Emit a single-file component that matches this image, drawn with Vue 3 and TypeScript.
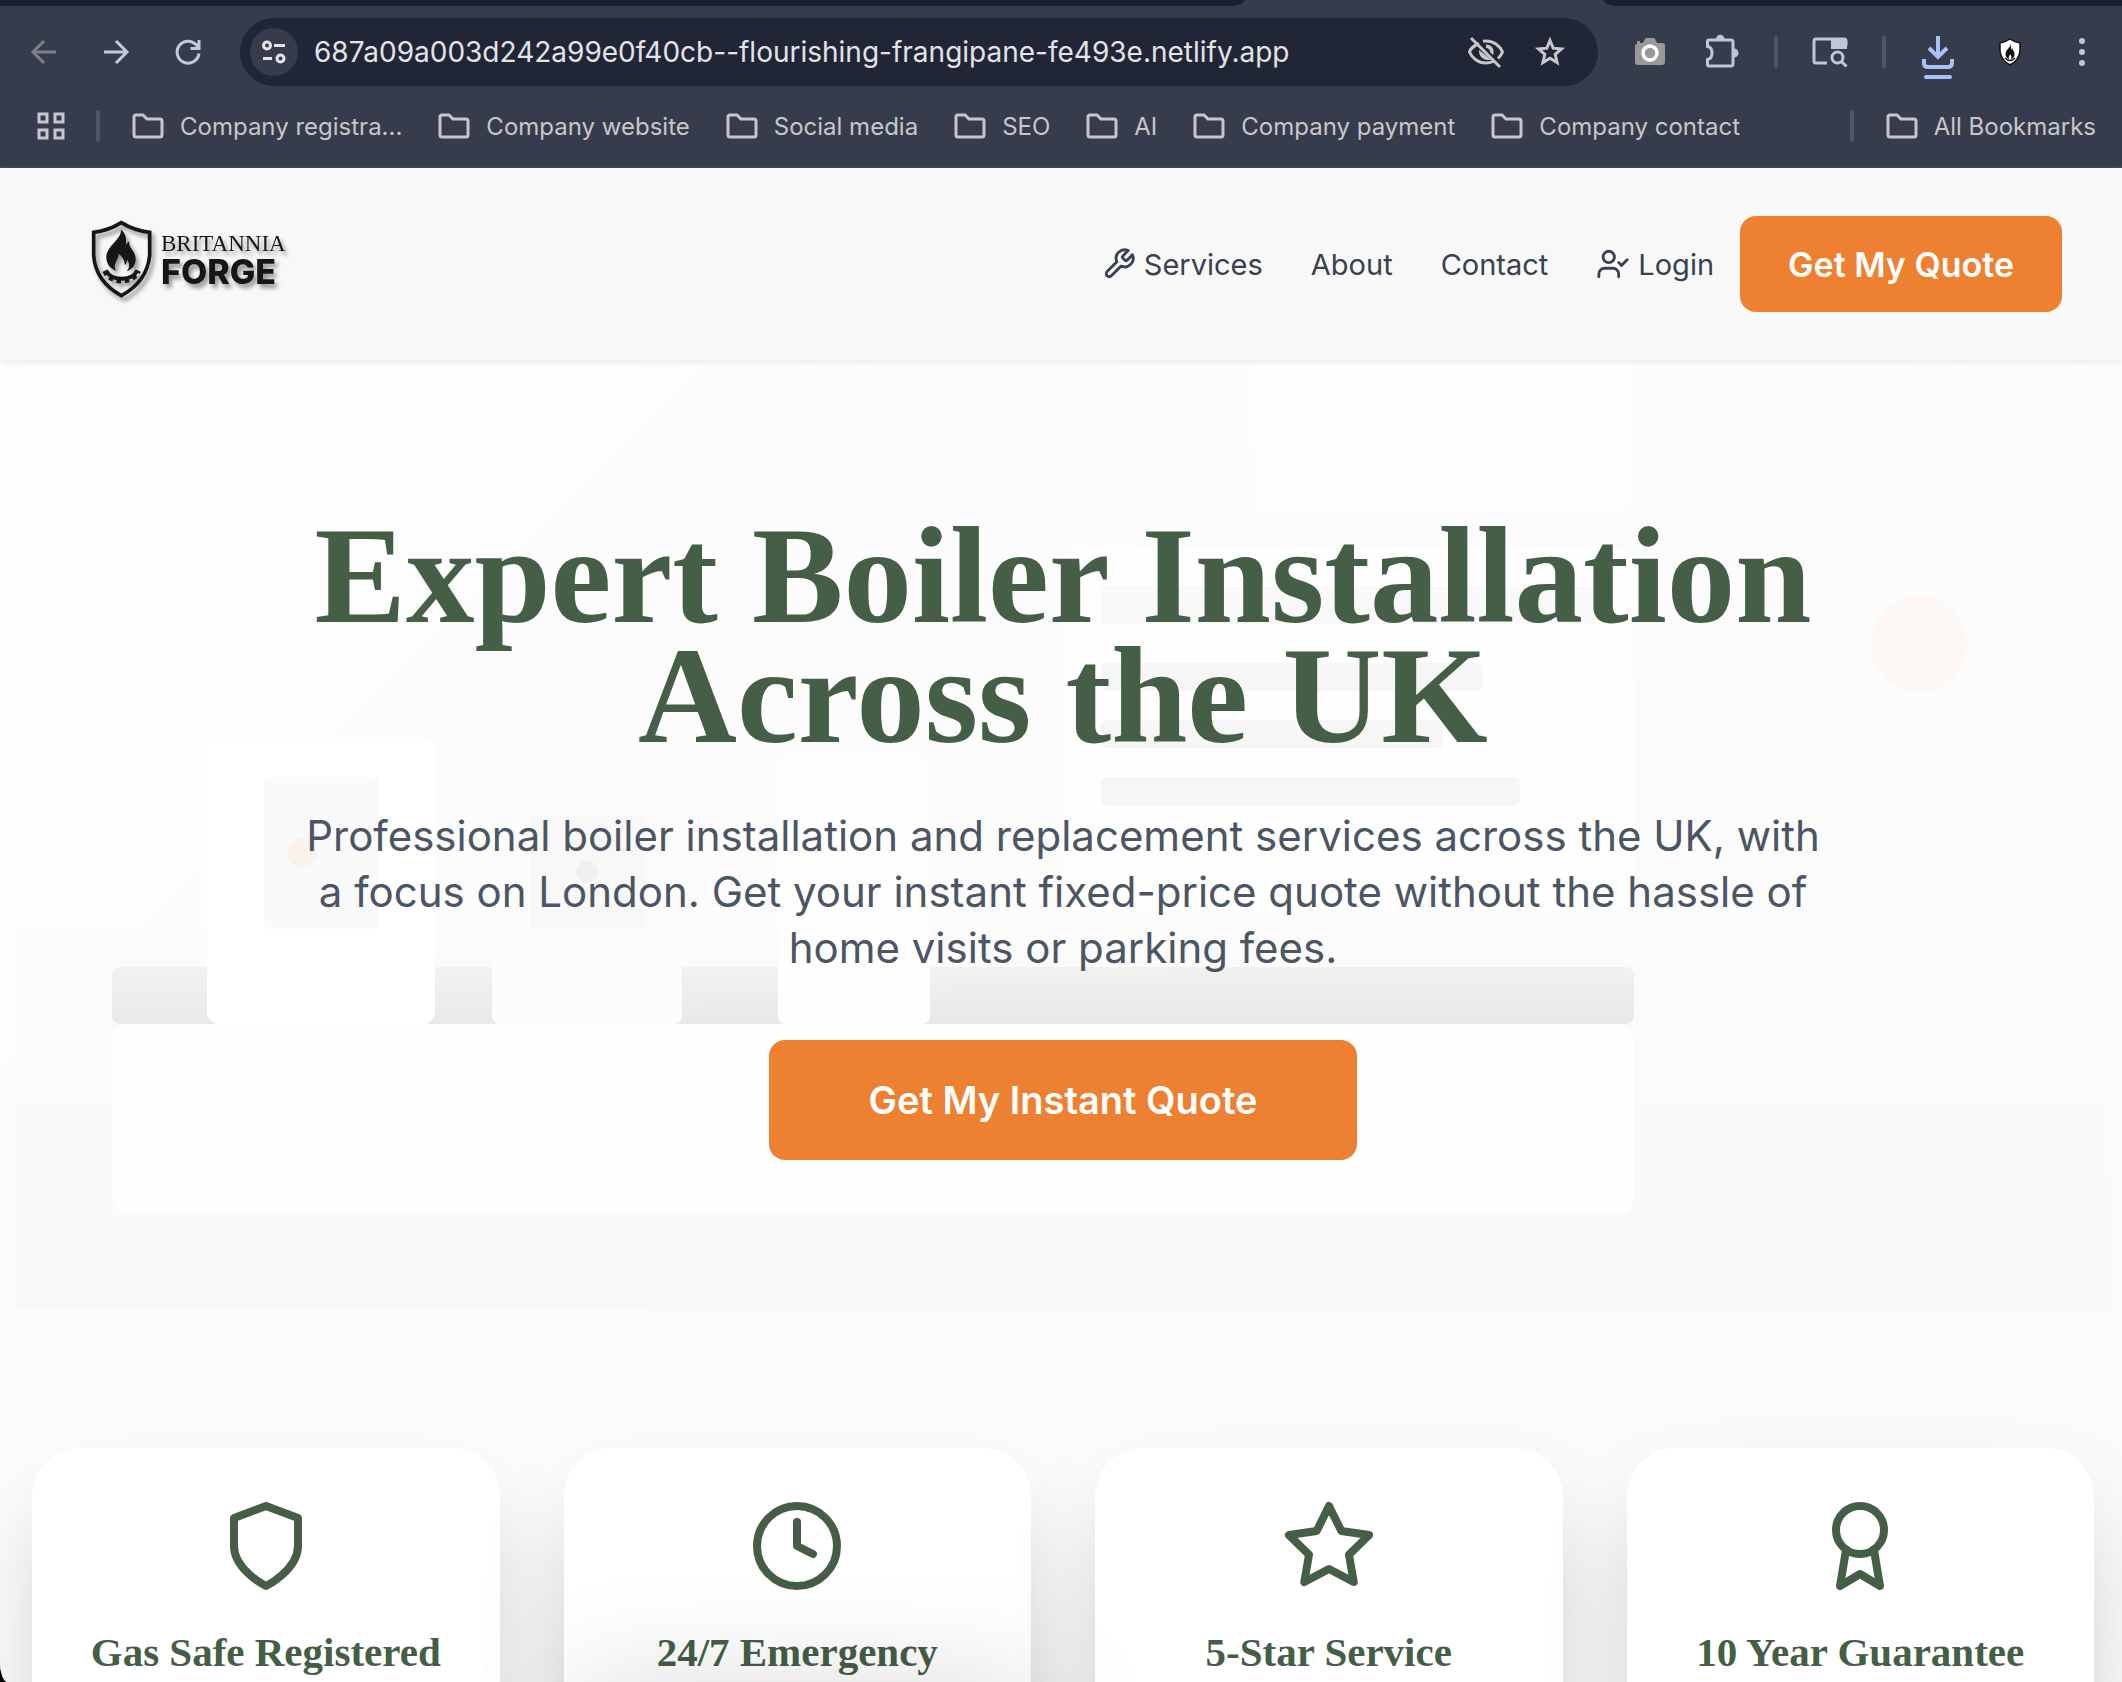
<script setup lang="ts">
interface Feature {
  title: string
  icon: 'shield' | 'clock' | 'star' | 'award'
}

const bookmarks: string[] = [
  'Company registra...',
  'Company website',
  'Social media',
  'SEO',
  'AI',
  'Company payment',
  'Company contact',
]

const features: Feature[] = [
  { title: 'Gas Safe Registered', icon: 'shield' },
  { title: '24/7 Emergency', icon: 'clock' },
  { title: '5-Star Service', icon: 'star' },
  { title: '10 Year Guarantee', icon: 'award' },
]

const address = '687a09a003d242a99e0f40cb--flourishing-frangipane-fe493e.netlify.app'
</script>

<template>
  <div class="window">
    <div class="browser">
      <div class="tabstrip">
        <div class="tabs-left"></div>
        <div class="tabs-right"></div>
      </div>
      <div class="toolbar">
        <div class="nav-buttons">
          <button class="icon-btn dim" aria-label="Back">
            <svg width="28" height="28" viewBox="0 0 28 28"><path d="M26 14H3M14 3L3 14l11 11" /></svg>
          </button>
          <button class="icon-btn" aria-label="Forward">
            <svg width="28" height="28" viewBox="0 0 28 28"><path d="M2 14h23M14 3l11 11-11 11" /></svg>
          </button>
          <button class="icon-btn" aria-label="Reload">
            <svg width="28" height="28" viewBox="0 0 28 28"><path d="M25 15.500A11 11 0 1 1 22 6.500L24 9M25 2v8.500h-8.500" /></svg>
          </button>
        </div>
        <div class="omnibox">
          <button class="site-info" aria-label="Site information">
            <svg width="28" height="28" viewBox="0 0 28 28"><circle cx="7" cy="7.500" r="3.500" /><path d="M14 7.500h11M3 20.500h9" /><circle cx="20.500" cy="20.500" r="3.500" /></svg>
          </button>
          <input class="url" type="text" aria-label="Address" :value="address" />
          <button class="omni-btn" aria-label="Tracking protection">
            <svg width="38" height="34" viewBox="0 0 38 34"><path d="M12 8.500C6 11 3 15 2.500 17 5 23 11 28 19 28c2.500 0 5-.5 7-1.500M16 6.200c1-.2 2-.2 3-.2 8 0 14 5 16.500 11-1 2.500-2.500 4.500-4.500 6.500M4 3l29 29" /><path class="filled" d="M12 15l12 9.500a9 9 0 0 1-12-9.500zM19 9.500a7.500 7.500 0 0 1 7 10.500l-3-3c.2-2-1.500-4-4-4z" /></svg>
          </button>
          <button class="omni-btn" aria-label="Bookmark this page">
            <svg width="32" height="32" viewBox="0 0 32 32"><path d="M16 4.500l3.200 7.700 8.300.7-6.300 5.500 1.900 8.100-7.100-4.300-7.100 4.300 1.900-8.100-6.300-5.500 8.300-.7z" stroke-linejoin="miter" /></svg>
          </button>
        </div>
        <div class="extensions">
          <button class="ext" aria-label="Screenshot">
            <svg width="32" height="30" viewBox="0 0 32 30"><path d="M1 9q0-2 2-2V4h3v2h3l2-4q.5-1 2-1h6q1.500 0 2 1l2 4h5q3 0 3 3v16q0 3-3 3H4q-3 0-3-3z" fill="#999" /><circle cx="16" cy="16" r="7" fill="#999" stroke="#fff" stroke-width="3.500" /></svg>
          </button>
          <button class="ext" aria-label="Extensions">
            <svg width="36" height="36" viewBox="0 0 36 36"><path class="line" d="M3.500 7.500Q3.500 6 5 6h22q2 0 2 2v22q0 2-2 2H5q-1.500 0-1.500-1.500V25.500c6-1 6-12 0-13z" /><path fill="#bfc6da" d="M12 5a4.200 4.200 0 0 1 8.400 0zM30 14.500a4.200 4.200 0 0 1 0 9z" /></svg>
          </button>
          <span class="sep"></span>
          <button class="ext" aria-label="Search side panel">
            <svg width="36" height="32" viewBox="0 0 36 32"><path class="line" d="M15 27H4q-2 0-2-2V5q0-2 2-2h28q2 0 2 2v5" /><path fill="#bfc6da" d="M19 2h13q3 0 3 3v8H19z" /><circle class="line" cx="25.500" cy="21.500" r="5.500" /><path class="line" d="M29.500 25.500l5 5" /></svg>
          </button>
          <span class="sep"></span>
          <button class="ext" aria-label="Downloads">
            <svg width="32" height="54" viewBox="0 -10 32 54"><g fill="none" stroke="#a8c1fb" stroke-width="4"><path d="M16 1v20M7 13l9 9 9-9M2 24v4q0 4 4 4h20q4 0 4-4v-4" /><path d="M4 42h24" stroke-linecap="round" /></g></svg>
          </button>
          <button class="ext" aria-label="Britannia Forge">
            <svg width="22" height="28" viewBox="0 0 22 28"><path d="M11 1Q6 4.500 1 5v8q1 9 10 14 9-5 10-14V5Q16 4.500 11 1z" fill="#fff" stroke="#111" stroke-width="1.500" /><path d="M11 6c1 4-4.500 5-4.500 10 0 3 2 4.500 3.500 5-1-2 1-3 1-5 1.500 1.500 1.500 3 1 5 2-.5 3.500-2 3.500-5S13 12 13.500 10c-1 .5-1 1-1.500 2 0-3 0-5-1-6z" fill="#111" /><path d="M6 20q5 5 10 0" fill="none" stroke="#111" stroke-width="1.500" /></svg>
          </button>
          <button class="ext" aria-label="Menu">
            <svg width="8" height="30" viewBox="0 0 8 30" fill="#bfc6da"><circle cx="4" cy="4" r="3" /><circle cx="4" cy="15" r="3" /><circle cx="4" cy="26" r="3" /></svg>
          </button>
        </div>
      </div>
      <div class="bookmarks">
        <button class="apps" aria-label="Apps">
          <svg width="30" height="30" viewBox="0 0 30 30"><path d="M3 3h8v8H3zM19 3h8v8h-8zM3 19h8v8H3zM19 19h8v8h-8z" /></svg>
        </button>
        <span class="divider"></span>
        <a v-for="name in bookmarks" :key="name" class="bookmark" href="#">
          <svg width="32" height="26" viewBox="0 0 32 26"><path d="M2 4q0-2 2-2h7l4 4h13q2 0 2 2v14q0 2-2 2H4q-2 0-2-2z" /></svg>
          <span>{{ name }}</span>
        </a>
        <span class="divider end"></span>
        <a class="bookmark all" href="#">
          <svg width="32" height="26" viewBox="0 0 32 26"><path d="M2 4q0-2 2-2h7l4 4h13q2 0 2 2v14q0 2-2 2H4q-2 0-2-2z" /></svg>
          <span>All Bookmarks</span>
        </a>
      </div>
    </div>

    <header class="site-header">
      <a class="logo" href="#" aria-label="Britannia Forge">
        <svg width="66" height="80" viewBox="90 86 198 240">
          <path d="M184 97Q145 121 101 126v70q6 78 83 120 77-42 85-120v-70q-46-5-85-29z" fill="none" stroke="#151717" stroke-width="11" />
          <path d="M183 118c1 32-44 47-44 84 1 22 16 34 29 39-12-20 9-32 8-51 12 10 20 22 18 34 4-2 7-8 7-16 9 11 9 23-1 35 14-5 27-17 27-37 0-24-23-34-19-53-6 3-9 8-11 15 3-22 2-38-14-50z" fill="#151717" />
          <path d="M138 240c14 34 80 34 94 0" fill="none" stroke="#151717" stroke-width="12" />
          <path d="M134 242c14 40 88 40 102 0" fill="none" stroke="#151717" stroke-width="14" stroke-dasharray="13 11" />
        </svg>
        <span class="wordmark">
          <span class="word-top">BRITANNIA</span>
          <span class="word-bottom">FORGE</span>
        </span>
      </a>
      <nav class="menu">
        <a href="#">
          <svg width="34" height="34" viewBox="0 0 24 24"><path d="M14.700 6.300a1 1 0 0 0 0 1.400l1.600 1.600a1 1 0 0 0 1.400 0l3.770-3.770a6 6 0 0 1-7.940 7.940l-6.910 6.910a2.120 2.120 0 0 1-3-3l6.910-6.910a6 6 0 0 1 7.940-7.940l-3.760 3.760z" /></svg>
          Services
        </a>
        <a href="#">About</a>
        <a href="#">Contact</a>
        <a href="#">
          <svg width="34" height="34" viewBox="0 0 24 24"><path d="M16 21v-2a4 4 0 0 0-4-4H6a4 4 0 0 0-4 4v2M16 11l2 2 4-4" /><circle cx="9" cy="7" r="4" /></svg>
          Login
        </a>
      </nav>
      <button class="quote">Get My Quote</button>
    </header>

    <main class="hero">
      <svg class="scene" viewBox="0 0 2122 1050" preserveAspectRatio="xMidYMin slice" aria-hidden="true">
        <defs>
          <linearGradient id="counter" x1="0" y1="0" x2="0.100" y2="1">
            <stop offset="0" stop-color="#f2f2f2" />
            <stop offset="1" stop-color="#e9e9e9" />
          </linearGradient>
          <linearGradient id="floor" x1="0" y1="0" x2="0" y2="1">
            <stop offset="0" stop-color="#fbfbfb" />
            <stop offset="1" stop-color="#f9f9f9" />
          </linearGradient>
        </defs>
        <rect x="16" y="569" width="2093" height="381" fill="url(#floor)" />
        <rect x="1254" y="-20" width="380" height="170" rx="16" fill="#fefefe" />
        <rect x="1063" y="189" width="571" height="361" rx="16" fill="#fefefe" />
        <rect x="1101" y="226" width="495" height="39" rx="6" fill="#f9f9f9" />
        <rect x="1101" y="303" width="381" height="28" rx="6" fill="#f6f6f6" />
        <rect x="1101" y="360" width="342" height="28" rx="6" fill="#f6f6f6" />
        <rect x="1101" y="417" width="419" height="29" rx="6" fill="#f6f6f6" />
        <rect x="1729" y="112" width="286" height="383" rx="12" fill="#fcfcfc" />
        <circle cx="1919" cy="284" r="48" fill="#fdf8f4" />
        <rect x="112" y="607" width="1522" height="57" rx="8" fill="url(#counter)" />
        <rect x="112" y="664" width="1522" height="190" rx="16" fill="#fefefe" />
        <rect x="207" y="378" width="228" height="286" rx="12" fill="#ffffff" />
        <rect x="264" y="417" width="114" height="152" rx="4" fill="#fafafa" />
        <circle cx="302" cy="493" r="15" fill="#fcf2ec" />
        <rect x="492" y="417" width="190" height="247" rx="8" fill="#fcfcfc" />
        <rect x="530" y="455" width="115" height="114" rx="4" fill="#f8f8f8" />
        <circle cx="587" cy="512" r="11" fill="#f0f0f0" />
        <rect x="778" y="398" width="152" height="266" rx="8" fill="#fefefe" />
      </svg>
      <div class="hero-copy">
        <h1>Expert Boiler Installation Across the UK</h1>
        <p>
          Professional boiler installation and replacement services across the UK, with
          a focus on London. Get your instant fixed-price quote without the hassle of
          home visits or parking fees.
        </p>
        <button class="cta">Get My Instant Quote</button>
      </div>
      <section class="features">
        <article v-for="item in features" :key="item.title" class="card">
          <svg width="96" height="96" viewBox="0 0 24 24">
            <path v-if="item.icon === 'shield'" d="M12 22s8-4 8-10V5l-8-3-8 3v7c0 6 8 10 8 10z" />
            <template v-else-if="item.icon === 'clock'">
              <circle cx="12" cy="12" r="10" />
              <path d="M12 6v6l4 2" />
            </template>
            <path v-else-if="item.icon === 'star'" d="M12 2l3.090 6.260L22 9.270l-5 4.870 1.180 6.880L12 17.770l-6.180 3.250L7 14.140 2 9.270l6.910-1.010z" />
            <template v-else>
              <circle cx="12" cy="8" r="6" />
              <path d="M15.477 12.890L17 22l-5-3-5 3 1.523-9.110" />
            </template>
          </svg>
          <h2>{{ item.title }}</h2>
        </article>
      </section>
    </main>
    <div class="bottom-shade"></div>
  </div>
</template>

<style>
body {
  margin: 0;
  background: #000;
}
</style>

<style scoped>
.window {
  position: relative;
  height: 100vh;
  overflow: hidden;
  border-bottom-left-radius: 8px 20px;
  background: #fbfbfb;
  font-family: Inter, "Liberation Sans", sans-serif;
}
button {
  border: 0;
  padding: 0;
  background: none;
  font-family: inherit;
}
svg {
  display: block;
  flex: none;
}
a {
  text-decoration: none;
}

/* Browser chrome */
.browser {
  height: 168px;
  box-sizing: border-box;
  background: #363c4b;
  border-bottom: 2px solid #44464c;
}
.tabstrip {
  display: flex;
  justify-content: space-between;
  height: 6px;
}
.tabs-left,
.tabs-right {
  background: #1a2030;
}
.tabs-left {
  width: 1244px;
  border-bottom-right-radius: 12px 6px;
}
.tabs-right {
  width: 518px;
  border-bottom-left-radius: 12px 6px;
}
.toolbar {
  display: flex;
  align-items: center;
  margin-top: 12px;
  height: 68px;
}
.nav-buttons {
  display: flex;
  gap: 44px;
  padding: 0 38px 0 30px;
}
.icon-btn svg {
  fill: none;
  stroke: #bfcbe4;
  stroke-width: 3;
}
.icon-btn.dim svg {
  stroke: #7b808c;
}
.omnibox {
  display: flex;
  align-items: center;
  flex: 1;
  height: 68px;
  padding: 0 32px 0 10px;
  box-sizing: border-box;
  border-radius: 34px;
  background: #202635;
}
.site-info {
  display: flex;
  align-items: center;
  justify-content: center;
  width: 48px;
  height: 48px;
  border-radius: 50%;
  background: #363c4b;
}
.site-info svg,
.omni-btn svg {
  fill: none;
  stroke: #e3e3e8;
  stroke-width: 3;
}
.url {
  flex: 1;
  min-width: 0;
  margin-left: 16px;
  padding: 0;
  border: 0;
  outline: 0;
  background: none;
  color: #e3e3e8;
  font-family: inherit;
  font-size: 28px;
}
.omni-btn {
  margin-left: 29px;
}
.omni-btn svg {
  stroke: #c7c7cb;
}
.omni-btn .filled {
  fill: #c7c7cb;
  stroke: none;
}
.extensions {
  display: flex;
  align-items: center;
  padding: 0 4px 0 16px;
}
.ext {
  display: flex;
  align-items: center;
  justify-content: center;
  width: 72px;
}
.extensions .line {
  fill: none;
  stroke: #bfc6da;
  stroke-width: 3;
}
.sep,
.divider {
  width: 4px;
  height: 32px;
  border-radius: 2px;
  background: #505665;
}
.sep {
  margin: 0 16px;
}
.bookmarks {
  display: flex;
  align-items: center;
  height: 80px;
  padding: 0 26px 0 36px;
}
.apps {
  margin-right: 30px;
}
.apps svg,
.bookmark svg {
  fill: none;
  stroke: #c7c7cb;
  stroke-width: 3;
}
.bookmark {
  display: flex;
  align-items: center;
  gap: 16px;
  margin-left: 32px;
  color: #c7c7cb;
  font-size: 24px;
  white-space: nowrap;
}
.bookmark + .bookmark {
  margin-left: 36px;
}
.divider.end {
  margin-left: auto;
}

/* Site header */
.site-header {
  position: relative;
  z-index: 1;
  display: flex;
  align-items: center;
  height: 192px;
  padding: 0 60px 0 90px;
  background: #f8f8f8;
  box-shadow: 0 2px 6px rgba(0, 0, 0, 0.08);
}
.logo {
  display: flex;
  align-items: center;
  gap: 5px;
  padding-bottom: 10px;
  color: #151717;
  filter: drop-shadow(3px 4px 2px rgba(0, 0, 0, 0.4));
}
.wordmark {
  display: flex;
  flex-direction: column;
}
.word-top {
  font-family: "Liberation Serif", serif;
  font-size: 23px;
  line-height: 26px;
}
.word-bottom {
  font-size: 34px;
  font-weight: 800;
  line-height: 30px;
}
.menu {
  display: flex;
  align-items: center;
  gap: 48px;
  margin-left: auto;
  margin-right: 26px;
}
.menu a {
  display: flex;
  align-items: center;
  gap: 8px;
  color: #374151;
  font-size: 29px;
}
.menu svg {
  fill: none;
  stroke: #374151;
  stroke-width: 2;
  stroke-linecap: round;
  stroke-linejoin: round;
}
.quote,
.cta {
  border-radius: 16px;
  background: #ee8031;
  color: #fff;
  font-weight: 600;
  white-space: nowrap;
}
.quote {
  height: 96px;
  padding: 0 48px;
  font-size: 34px;
}

/* Hero */
.hero {
  position: relative;
  background: linear-gradient(135deg, #fdfdfd, #fafafa);
}
.scene {
  position: absolute;
  top: 0;
  left: 0;
  width: 100%;
}
.hero-copy {
  position: relative;
  display: flex;
  flex-direction: column;
  align-items: center;
  padding: 156px 0 288px 4px;
  text-align: center;
}
h1,
p,
h2 {
  margin: 0;
}
h1,
p {
  max-width: 1530px;
}
h1 {
  color: #455e46;
  font-family: "Liberation Serif", serif;
  font-size: 137px;
  font-weight: 700;
  line-height: 120px;
}
p {
  margin-top: 52px;
  color: #4b5563;
  font-size: 42px;
  line-height: 56px;
}
.cta {
  height: 120px;
  margin-top: 64px;
  padding: 0 100px;
  font-size: 38px;
}
.features {
  position: relative;
  display: grid;
  grid-template-columns: repeat(4, 1fr);
  gap: 64px;
  padding: 0 28px 200px 32px;
}
.card {
  display: flex;
  flex-direction: column;
  align-items: center;
  height: 400px;
  padding-top: 50px;
  box-sizing: border-box;
  border-radius: 48px;
  background: #fff;
  box-shadow: 0 50px 100px -24px rgba(0, 0, 0, 0.25);
}
.card svg {
  fill: none;
  stroke: #455e46;
  stroke-width: 2;
  stroke-linecap: round;
  stroke-linejoin: round;
}
h2 {
  margin-top: 30px;
  color: #455e46;
  font-family: "Liberation Serif", serif;
  font-size: 41px;
  line-height: 56px;
}
.bottom-shade {
  position: absolute;
  left: 28%;
  right: 52%;
  top: 100%;
  height: 40px;
  box-shadow: 0 30px 120px 20px rgba(0, 0, 0, 0.18);
}
</style>
